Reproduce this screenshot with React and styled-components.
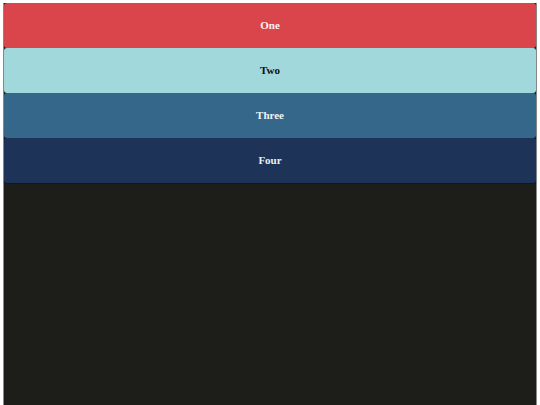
import React from 'react';
import styled, { createGlobalStyle } from 'styled-components';

const GlobalStyle = createGlobalStyle`
    html, body {
        margin: 0;
        padding: 0;
        height: 100%;
        background: #fff;
    }
    body {
        padding: 3px 3px 0 3px;
        box-sizing: border-box;
    }
    #root {
        height: 100%;
    }
`;

const Page = styled.div`
    height: 100%;
    background: #1d1e1a;
    border-left: 1px solid #8a8a8a;
    border-right: 1px solid #8a8a8a;
    box-sizing: border-box;
    display: flex;
    flex-direction: column;
`;

const Panel = styled.div`
    height: 45px;
    flex-shrink: 0;
    display: flex;
    align-items: center;
    justify-content: center;
    padding-bottom: 2px;
    box-sizing: border-box;
    background: ${(p) => p.$bg};
    color: ${(p) => p.$fg};
    font-family: "Liberation Serif", "Times New Roman", serif;
    font-weight: bold;
    font-size: 11px;
    border-radius: 3px;
    box-shadow: 0 1px 1px rgba(0, 0, 0, 0.25);
    position: relative;
`;

const panels = [
    { label: 'One', bg: '#d9454b', fg: '#fbeff0' },
    { label: 'Two', bg: '#a0d8dc', fg: '#111' },
    { label: 'Three', bg: '#34678a', fg: '#eef3f7' },
    { label: 'Four', bg: '#1d3358', fg: '#eef0f4' },
];

const App = () => {
    return (
        <>
            <GlobalStyle />
            <Page>
                {panels.map((p) => (
                    <Panel key={p.label} $bg={p.bg} $fg={p.fg}>
                        {p.label}
                    </Panel>
                ))}
            </Page>
        </>
    );
};

export default App;
